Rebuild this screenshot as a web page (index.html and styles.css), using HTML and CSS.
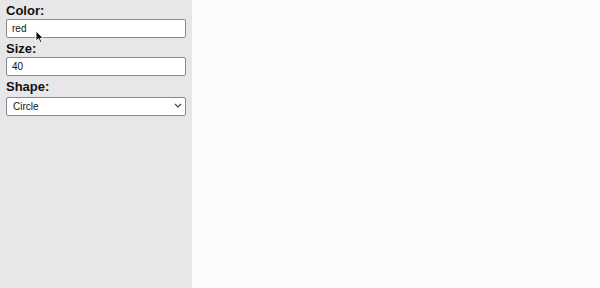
FILE: index.html
```html
<!DOCTYPE html>
<html lang="en">
<head>
  <meta charset="UTF-8" />
  <meta name="viewport" content="width=device-width, initial-scale=1.0"/>
  <title>Shape Controls</title>
  <link rel="stylesheet" href="styles.css">
</head>
<body>

  <div class="app">
    <div class="controls">
      <label class="field-label" for="color">Color:</label>
      <input class="field" id="color" type="text" value="red">

      <label class="field-label" for="size">Size:</label>
      <input class="field" id="size" type="text" value="40">

      <label class="field-label" for="shape">Shape:</label>
      <div class="select-wrap">
        <select class="field select" id="shape">
          <option>Circle</option>
          <option>Square</option>
          <option>Triangle</option>
        </select>
        <svg class="chevron" width="8" height="5" viewBox="0 0 8 5">
          <path d="M1 1 L4 4 L7 1" fill="none" stroke="#444" stroke-width="1.2"/>
        </svg>
      </div>

      <!-- mouse pointer from the capture -->
      <svg class="pointer" width="10" height="14" viewBox="0 0 10 14">
        <path d="M1 1 L1 11 L3.5 8.8 L5.2 12.6 L6.8 11.9 L5.2 8.3 L8.4 8.3 Z" fill="#111" stroke="#fff" stroke-width="0.9"/>
      </svg>
    </div>

    <div class="canvas"></div>
  </div>

</body>
</html>
```

FILE: styles.css
```css
* {
  box-sizing: border-box;
}

body {
  margin: 0;
  font-family: "Liberation Sans", Arial, sans-serif;
  background-color: #fcfbfd;
}

.app {
  display: flex;
  height: 288px;
}

.controls {
  position: relative;
  width: 192px;
  padding: 2px 6px 0 6px;
  background-color: #e7e6e9;
  display: flex;
  flex-direction: column;
}

.canvas {
  flex: 1;
  background-color: #fcfbfd;
}

.field-label {
  display: block;
  padding-top: 1px;
  font-size: 13px;
  font-weight: bold;
  line-height: 16px;
  color: #111;
}

.field {
  width: 180px;
  height: 19px;
  margin: 0 0 2px 0;
  padding: 0 5px;
  border: 1px solid #8a8a8d;
  border-radius: 2px;
  background: #fff;
  font-family: "Liberation Sans", Arial, sans-serif;
  font-size: 10px;
  color: #111;
  outline: none;
}

.select-wrap {
  position: relative;
  width: 180px;
  margin-top: 1px;
}

.select {
  appearance: none;
  -webkit-appearance: none;
  padding-left: 6px;
}

.chevron {
  position: absolute;
  right: 4px;
  top: 7px;
}

.pointer {
  position: absolute;
  left: 35px;
  top: 30px;
}
```
